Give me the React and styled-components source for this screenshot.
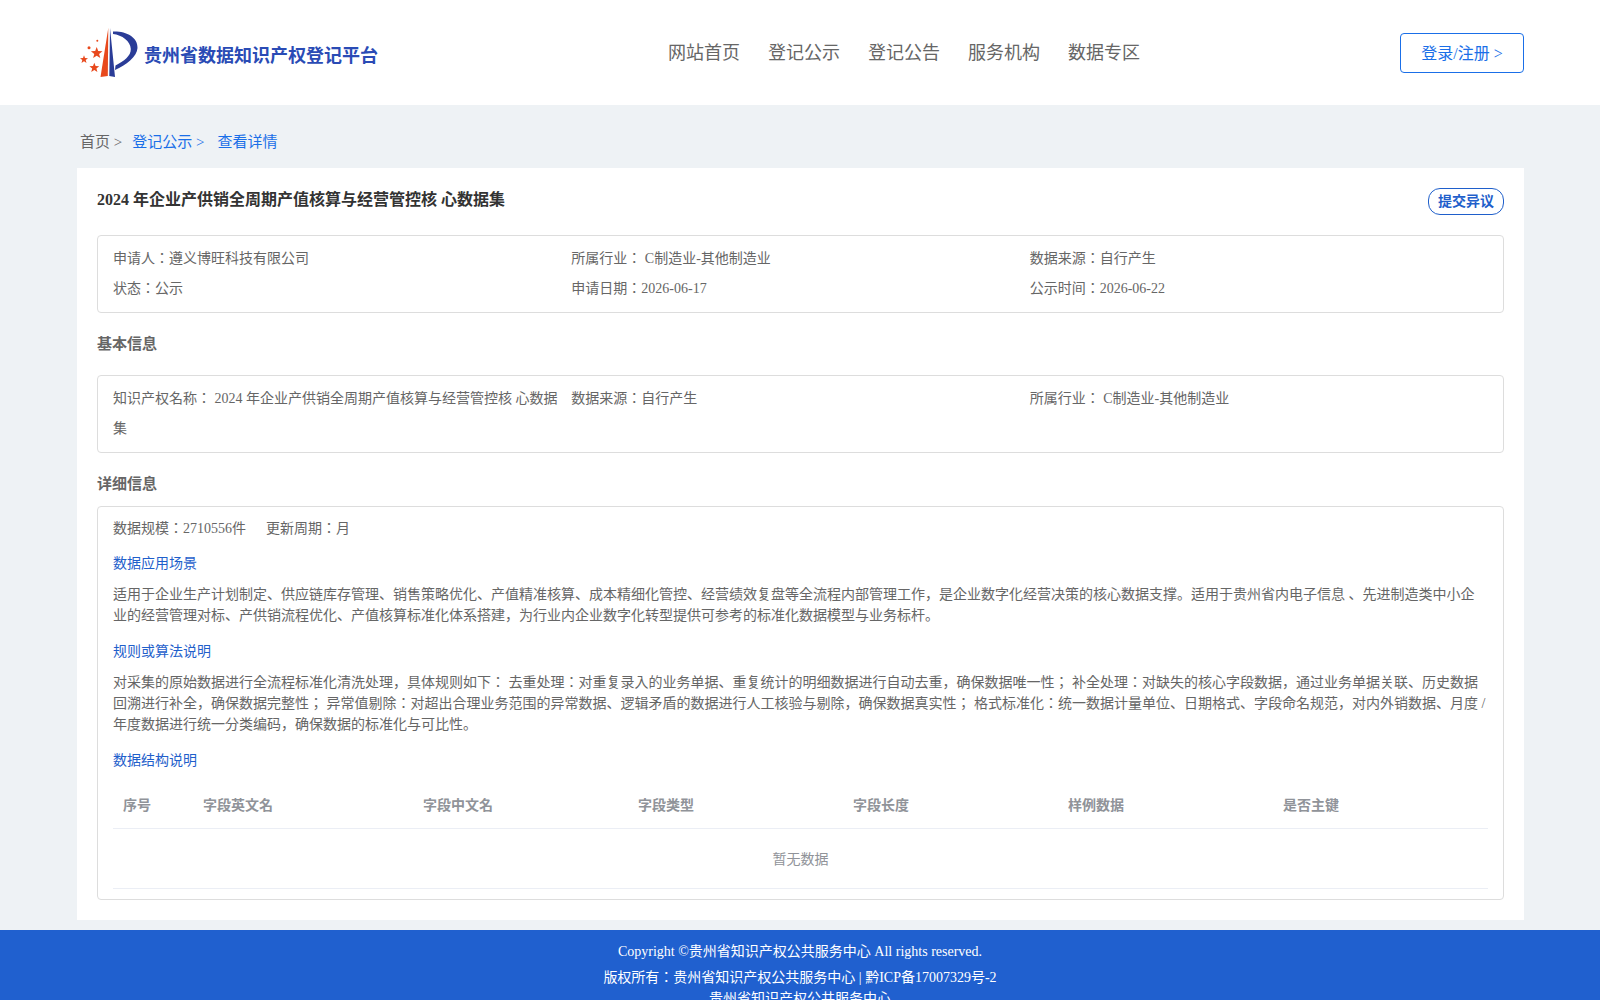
import React from 'react'
import styled, { createGlobalStyle } from 'styled-components'

const GlobalStyle = createGlobalStyle`
  html, body {
    margin: 0;
    padding: 0;
    background: #eef2f5;
    font-family: "Liberation Serif", "Noto Sans CJK JP", serif;
    color: #666;
    overflow-x: hidden;
  }
  * {
    box-sizing: border-box;
  }
`

const Header = styled.header`
  height: 105px;
  background: #fff;
  padding: 0 76px 0 80px;
  display: grid;
  grid-template-columns: 588px 1fr auto;
  align-items: center;
`

const Brand = styled.div`
  display: flex;
  align-items: center;
  gap: 4px;
  font-size: 18px;
  font-weight: bold;
  color: #2a4bb5;
`

const BrandName = styled.span`
  padding-top: 2px;
`

const Nav = styled.nav`
  display: flex;
  gap: 28px;
  font-size: 18px;
  color: #666;
  margin-bottom: 4px;
`

const LoginBtn = styled.button`
  width: 124px;
  height: 40px;
  padding: 0 0 2px;
  background: #fff;
  border: 1px solid #1a6fe8;
  border-radius: 4px;
  color: #1a6fe8;
  font: inherit;
  font-size: 16px;
`

const Main = styled.main`
  padding: 0 76px 10px 77px;
`

const Crumbs = styled.div`
  height: 63px;
  padding: 8px 0 0 3px;
  display: flex;
  align-items: center;
  font-size: 15px;
`

const Crumb = styled.span`
  color: ${(p) => (p.$active ? '#1a6fe8' : '#666')};
  margin-right: ${(p) => p.$gap || 0}px;
`

const Card = styled.section`
  background: #fff;
  padding: 20px;
`

const TitleRow = styled.div`
  display: flex;
  justify-content: space-between;
  align-items: flex-start;
  height: 47px;
`

const Title = styled.h1`
  margin: 0;
  font-size: 16px;
  line-height: 24px;
  font-weight: bold;
  color: #333;
`

const Dispute = styled.button`
  width: 76px;
  height: 27px;
  padding: 0 0 3px;
  background: #fff;
  border: 1px solid #1f5fcb;
  border-radius: 12px;
  color: #1f5fcb;
  font: inherit;
  font-size: 14px;
  font-weight: bold;
`

const Box = styled.div`
  border: 1px solid #ddd;
  border-radius: 4px;
  padding: ${(p) => p.$pad || '8px 15px'};
  font-size: 14px;
  color: #666;
`

const InfoGrid = styled.div`
  display: grid;
  grid-template-columns: repeat(3, 1fr);
  line-height: 30px;
`

const InfoCell = styled.div`
  padding-right: 12px;
`

const SectionTitle = styled.h2`
  margin: 0;
  font-size: 15px;
  font-weight: bold;
  color: #666;
  line-height: 22px;
  padding: ${(p) => p.$pad};
`

const Stats = styled.div`
  display: flex;
  gap: 20px;
  line-height: 22px;
`

const BlueHead = styled.div`
  color: #1f5fcb;
  line-height: 20px;
  margin: ${(p) => p.$margin};
`

const Para = styled.p`
  margin: 0;
  line-height: 21px;
`

const Table = styled.table`
  width: 100%;
  border-collapse: collapse;
  table-layout: fixed;
  margin-top: 10px;
`

const Th = styled.th`
  height: 47px;
  padding: 0 10px;
  text-align: left;
  font-size: 14px;
  font-weight: bold;
  color: #909399;
  border-bottom: 1px solid #ebeef5;
`

const Empty = styled.td`
  height: 60px;
  text-align: center;
  color: #909399;
  border-bottom: 1px solid #ebeef5;
`

const Footer = styled.footer`
  background: #2060cf;
  color: #fff;
  font-size: 14px;
  text-align: center;
  padding: 11px 0 12px;
  line-height: 21px;
`

const FooterLine = styled.div`
  margin-bottom: ${(p) => p.$gap || 0}px;
`

const Logo = () => (
  <svg width="60" height="52" viewBox="0 0 60 50">
    <polygon points="28.3,0 20.5,49 27.8,48" fill="#e8491d" />
    <path
      d="M30 0 L29.3 48 L35 49 Z M33 3.5 C46 3 58 9 57.5 20 C57 29 46 37 35 42 L35.5 37.5 C44 33 51 28 50.8 21 C50.5 13 42 7 33 6 Z"
      fill="#2a3c97"
    />
    <g fill="#e8491d">
      <polygon points="16.7,19 18.2,23 22.5,23.2 19.1,25.9 20.3,30 16.7,27.7 13.1,30 14.3,25.9 10.9,23.2 15.2,23" />
      <polygon points="4,27.3 5,30 8,30.2 5.7,32 6.5,35 4,33.3 1.5,35 2.3,32 0,30.2 3,30" />
      <polygon points="14.3,34.7 15.6,38.1 19.2,38.3 16.4,40.5 17.4,44 14.3,42 11.2,44 12.2,40.5 9.4,38.3 13,38.1" />
      <circle cx="9" cy="19.7" r="1.5" />
      <circle cx="17.3" cy="12.7" r="1" />
    </g>
  </svg>
)

const columns = [
  ['序号', 80],
  ['字段英文名', 220],
  ['字段中文名', 215],
  ['字段类型', 215],
  ['字段长度', 215],
  ['样例数据', 215],
  ['是否主键', 215],
]

export default function App() {
  return (
    <>
      <GlobalStyle />
      <Header>
        <Brand>
          <Logo />
          <BrandName>贵州省数据知识产权登记平台</BrandName>
        </Brand>
        <Nav>
          <span>网站首页</span>
          <span>登记公示</span>
          <span>登记公告</span>
          <span>服务机构</span>
          <span>数据专区</span>
        </Nav>
        <LoginBtn>登录/注册 &gt;</LoginBtn>
      </Header>
      <Main>
        <Crumbs>
          <Crumb $gap={10}>首页 &gt;</Crumb>
          <Crumb $active $gap={13}>登记公示 &gt;</Crumb>
          <Crumb $active>查看详情</Crumb>
        </Crumbs>
        <Card>
          <TitleRow>
            <Title>2024 年企业产供销全周期产值核算与经营管控核 心数据集</Title>
            <Dispute>提交异议</Dispute>
          </TitleRow>
          <Box>
            <InfoGrid>
              <InfoCell>申请人：遵义博旺科技有限公司</InfoCell>
              <InfoCell>所属行业： C制造业-其他制造业</InfoCell>
              <InfoCell>数据来源：自行产生</InfoCell>
              <InfoCell>状态：公示</InfoCell>
              <InfoCell>申请日期：2026-06-17</InfoCell>
              <InfoCell>公示时间：2026-06-22</InfoCell>
            </InfoGrid>
          </Box>
          <SectionTitle $pad="20px 0 20px">基本信息</SectionTitle>
          <Box>
            <InfoGrid>
              <InfoCell>知识产权名称： 2024 年企业产供销全周期产值核算与经营管控核 心数据集</InfoCell>
              <InfoCell>数据来源：自行产生</InfoCell>
              <InfoCell>所属行业： C制造业-其他制造业</InfoCell>
            </InfoGrid>
          </Box>
          <SectionTitle $pad="20px 0 11px">详细信息</SectionTitle>
          <Box $pad="11px 15px 10px">
            <Stats>
              <span>数据规模：2710556件</span>
              <span>更新周期：月</span>
            </Stats>
            <BlueHead $margin="14px 0 10px">数据应用场景</BlueHead>
            <Para>适用于企业生产计划制定、供应链库存管理、销售策略优化、产值精准核算、成本精细化管控、经营绩效复盘等全流程内部管理工作，是企业数字化经营决策的核心数据支撑。适用于贵州省内电子信息 、先进制造类中小企业的经营管理对标、产供销流程优化、产值核算标准化体系搭建，为行业内企业数字化转型提供可参考的标准化数据模型与业务标杆。</Para>
            <BlueHead $margin="16px 0 10px">规则或算法说明</BlueHead>
            <Para>对采集的原始数据进行全流程标准化清洗处理，具体规则如下： 去重处理：对重复录入的业务单据、重复统计的明细数据进行自动去重，确保数据唯一性； 补全处理：对缺失的核心字段数据，通过业务单据关联、历史数据回溯进行补全，确保数据完整性； 异常值剔除：对超出合理业务范围的异常数据、逻辑矛盾的数据进行人工核验与剔除，确保数据真实性； 格式标准化：统一数据计量单位、日期格式、字段命名规范，对内外销数据、月度 / 年度数据进行统一分类编码，确保数据的标准化与可比性。</Para>
            <BlueHead $margin="16px 0 0">数据结构说明</BlueHead>
            <Table>
              <colgroup>
                {columns.map(([name, w]) => (
                  <col key={name} width={w} />
                ))}
              </colgroup>
              <thead>
                <tr>
                  {columns.map(([name]) => (
                    <Th key={name}>{name}</Th>
                  ))}
                </tr>
              </thead>
              <tbody>
                <tr>
                  <Empty colSpan={7}>暂无数据</Empty>
                </tr>
              </tbody>
            </Table>
          </Box>
        </Card>
      </Main>
      <Footer>
        <FooterLine $gap={5}>Copyright ©贵州省知识产权公共服务中心 All rights reserved.</FooterLine>
        <FooterLine>版权所有：贵州省知识产权公共服务中心 | 黔ICP备17007329号-2</FooterLine>
        <FooterLine>贵州省知识产权公共服务中心</FooterLine>
      </Footer>
    </>
  )
}
